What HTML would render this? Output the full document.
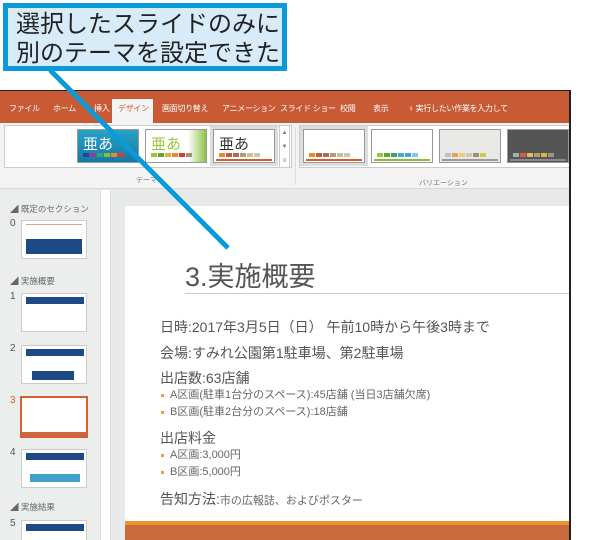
<!DOCTYPE html>
<html><head><meta charset="utf-8"><style>
*{margin:0;padding:0;box-sizing:border-box}
body{width:600px;height:540px;background:#fff;position:relative;overflow:hidden;font-family:"Liberation Sans","Noto Sans CJK JP",sans-serif}
.abs{position:absolute}
.frame{left:0;top:90px;width:571px;height:450px;border-right:2px solid #222;border-top:1px solid #222;background:#e8eaea;overflow:hidden}
.tabs{left:0;top:0;width:571px;height:32px;background:#c85a36}
.tab{position:absolute;top:12px;font-size:8px;color:#fff;white-space:nowrap;letter-spacing:-0.3px}
.ribbon{left:0;top:32px;width:571px;height:66px;background:#f3f3f3;border-bottom:1px solid #d8d8d8}
.th{position:absolute;top:6px;width:62px;height:34px;border:1px solid #999;background:#fff}
.sw{position:absolute;bottom:5px;left:5px;height:4px;display:flex;gap:1px}
.sw i{display:block;width:6px;height:4px}
.bar{position:absolute;left:2px;right:2px;bottom:1px;height:2px}
.left{left:0;top:99px;width:100px;height:351px;background:#eceeee}
.sec{position:absolute;left:10px;font-size:8.5px;color:#666;white-space:nowrap}
.num{position:absolute;left:10px;font-size:10px;color:#555}
.sl{position:absolute;left:21px;width:66px;height:39px;background:#fff;border:1px solid #ccc}
.slide{left:125px;top:115px;width:446px;height:335px;background:#fff}
.t{position:absolute;left:35px;white-space:nowrap;color:#555}
.h{font-size:14px}
.b{font-size:11px;color:#666;left:36px}
.b:before{content:"";display:inline-block;width:3px;height:3px;background:#e8a050;margin-right:6px;vertical-align:middle}
</style></head><body>
<div class="abs frame">
 <div class="abs tabs">
  <span class="tab" style="left:9px">ファイル</span>
  <span class="tab" style="left:53px">ホーム</span>
  <span class="tab" style="left:94px">挿入</span>
  <div style="position:absolute;left:112px;top:8px;width:41px;height:24px;background:#f3f3f3"></div>
  <span class="tab" style="left:118px;color:#c85a36">デザイン</span>
  <span class="tab" style="left:162px">画面切り替え</span>
  <span class="tab" style="left:222px">アニメーション</span>
  <span class="tab" style="left:280px">スライド ショー</span>
  <span class="tab" style="left:340px">校閲</span>
  <span class="tab" style="left:373px">表示</span>
  <span class="tab" style="left:408px">♀ 実行したい作業を入力して</span>
 </div>
 <div class="abs ribbon">
  <div style="position:absolute;left:4px;top:2px;width:288px;height:43px;background:#fff;border:1px solid #ccc"></div>
  <div style="position:absolute;left:299px;top:2px;width:272px;height:43px;background:#fff;border:1px solid #ccc"></div>
  <div class="th" style="left:77px;background:linear-gradient(#2aa2c8,#1578a8)"><span style="position:absolute;left:5px;top:3px;font-size:15px;color:#fff">亜あ</span><div class="sw"><i style="background:#1d4a86"></i><i style="background:#9b3b8e"></i><i style="background:#3aa07a"></i><i style="background:#8cba3a"></i><i style="background:#e88a30"></i><i style="background:#d24030"></i></div></div>
  <div class="th" style="left:145px;background:linear-gradient(90deg,#fff 70%,#8ec24a)"><span style="position:absolute;left:5px;top:3px;font-size:15px;color:#9cc43a">亜あ</span><div class="sw"><i style="background:#9cc43a"></i><i style="background:#6aa030"></i><i style="background:#e8b030"></i><i style="background:#e88a30"></i><i style="background:#d24030"></i><i style="background:#a09070"></i></div></div>
  <div class="th" style="left:213px;box-shadow:0 0 0 3px #ddd"><span style="position:absolute;left:5px;top:3px;font-size:15px;color:#333">亜あ</span><div class="sw"><i style="background:#e88a30"></i><i style="background:#c85a36"></i><i style="background:#a07060"></i><i style="background:#b09a80"></i><i style="background:#ccc090"></i><i style="background:#c8c8b0"></i></div><div class="bar" style="background:#d06030"></div></div>
  <div style="position:absolute;left:279px;top:2px;width:11px;height:43px;border:1px solid #ccc;background:#fff;font-size:6px;color:#777;text-align:center;line-height:14px">▲<br>▼<br>≡</div>
  <div style="position:absolute;left:295px;top:4px;height:58px;border-left:1px solid #ddd"></div>
  <div class="th" style="left:303px;box-shadow:0 0 0 3px #ddd"><div class="sw"><i style="background:#e88a30"></i><i style="background:#c85a36"></i><i style="background:#a07060"></i><i style="background:#b09a80"></i><i style="background:#ccc090"></i><i style="background:#c8c8b0"></i></div><div class="bar" style="background:#d06030"></div></div>
  <div class="th" style="left:371px"><div class="sw"><i style="background:#9cc43a"></i><i style="background:#6aa030"></i><i style="background:#3aa07a"></i><i style="background:#40b0b0"></i><i style="background:#40a8d8"></i><i style="background:#80c8e8"></i></div><div class="bar" style="background:#8cba3a"></div></div>
  <div class="th" style="left:439px;background:#e8e8e4"><div class="sw"><i style="background:#b0c8c8"></i><i style="background:#e8a050"></i><i style="background:#e8d070"></i><i style="background:#c8c8c0"></i><i style="background:#a09070"></i><i style="background:#d0c850"></i></div><div class="bar" style="background:#999"></div></div>
  <div class="th" style="left:507px;background:#555"><div class="sw"><i style="background:#a0b0b0"></i><i style="background:#d06040"></i><i style="background:#d8c070"></i><i style="background:#b0a070"></i><i style="background:#e8b040"></i><i style="background:#a09090"></i></div><div class="bar" style="background:#889"></div></div>
  <span style="position:absolute;left:136px;top:52px;font-size:7px;color:#777">テーマ</span>
  <span style="position:absolute;left:419px;top:55px;font-size:7px;color:#777">バリエーション</span>
 </div>
 <div class="abs left">
  <span class="sec" style="top:13px">◢ 既定のセクション</span>
  <span class="num" style="top:28px">0</span>
  <div class="sl" style="top:30px"><div style="position:absolute;left:4px;top:3px;width:56px;height:1px;background:#e8a090"></div><div style="position:absolute;left:4px;top:18px;width:56px;height:15px;background:#1d4a86"></div></div>
  <span class="sec" style="top:85px">◢ 実施概要</span>
  <span class="num" style="top:101px">1</span>
  <div class="sl" style="top:103px"><div style="position:absolute;left:4px;top:3px;width:58px;height:7px;background:#1d4a86"></div></div>
  <span class="num" style="top:153px">2</span>
  <div class="sl" style="top:155px"><div style="position:absolute;left:4px;top:3px;width:58px;height:7px;background:#1d4a86"></div><div style="position:absolute;left:10px;top:25px;width:42px;height:9px;background:#1d4a86"></div></div>
  <span class="num" style="top:205px;color:#d06030">3</span>
  <div class="sl" style="top:206px;border:2px solid #d86030;left:20px;width:68px;height:42px"><div style="position:absolute;left:0;right:0;bottom:0;height:4px;background:#c96a3c"></div></div>
  <span class="num" style="top:257px">4</span>
  <div class="sl" style="top:259px"><div style="position:absolute;left:4px;top:3px;width:58px;height:7px;background:#1d4a86"></div><div style="position:absolute;left:8px;top:24px;width:50px;height:8px;background:#40a0d0"></div></div>
  <span class="sec" style="top:311px">◢ 実施結果</span>
  <span class="num" style="top:328px">5</span>
  <div class="sl" style="top:330px"><div style="position:absolute;left:4px;top:3px;width:58px;height:7px;background:#1d4a86"></div></div>
 </div>
 <div class="abs" style="left:100px;top:99px;width:11px;height:351px;background:#fff;border-left:1px solid #ddd;border-right:1px solid #ddd"></div>
 <div class="abs slide">
  <div class="t" style="left:60px;top:49px;font-size:27px;color:#555">3.実施概要</div>
  <div style="position:absolute;left:60px;top:87px;right:0;height:1px;background:#ccc"></div>
  <div class="t h" style="top:111px">日時:2017年3月5日（日） 午前10時から午後3時まで</div>
  <div class="t h" style="top:137px">会場:すみれ公園第1駐車場、第2駐車場</div>
  <div class="t h" style="top:162px">出店数:63店舗</div>
  <div class="t b" style="top:180px">A区画(駐車1台分のスペース):45店舗 (当日3店舗欠席)</div>
  <div class="t b" style="top:197px">B区画(駐車2台分のスペース):18店舗</div>
  <div class="t h" style="top:222px">出店料金</div>
  <div class="t b" style="top:240px">A区画:3,000円</div>
  <div class="t b" style="top:257px">B区画:5,000円</div>
  <div class="t h" style="top:283px">告知方法:<span style="font-size:11px;color:#666">市の広報誌、およびポスター</span></div>
  <div style="position:absolute;left:0;right:0;bottom:0;height:20px;background:#c96a3c;border-top:4px solid #e8962a"></div>
 </div>
</div>
<svg class="abs" style="left:0;top:0" width="600" height="540"><line x1="50" y1="70" x2="228" y2="248" stroke="#0a9ad8" stroke-width="5"/></svg>
<div class="abs" style="left:3px;top:3px;width:284px;height:68px;background:#d7ecf8;border:5px solid #0a9ad8;padding:2px 8px;font-size:24px;line-height:29px;color:#222;white-space:nowrap">選択したスライドのみに<br>別のテーマを設定できた</div>
</body></html>
